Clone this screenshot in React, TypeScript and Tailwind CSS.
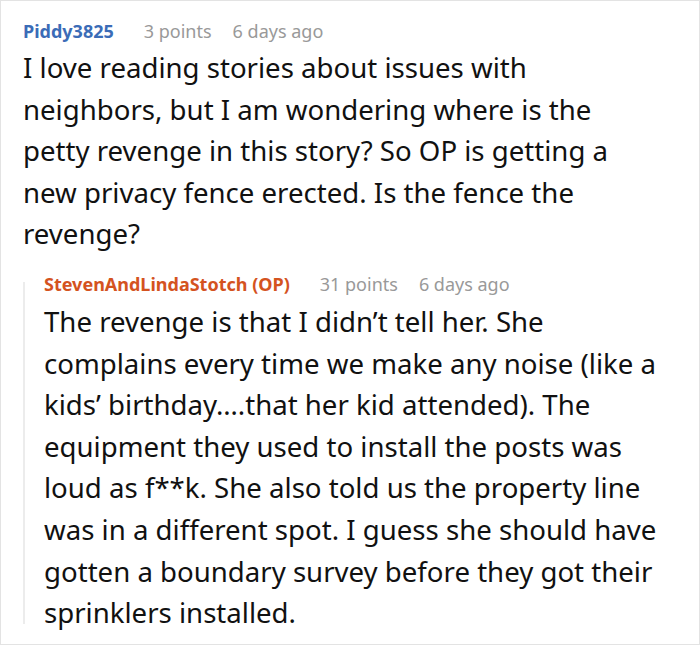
import React from "react";

const font = { fontFamily: '"Noto Sans", "Open Sans", sans-serif' };

function Meta({ name, color, points }: { name: string; color: string; points: string }) {
  return (
    <div className="flex items-center text-[18px] leading-[24px]">
      <span className={`font-bold text-[18px] ${color}`}>{name}</span>
      <span className="ml-[30px] text-[#999999]">{points}</span>
      <span className="ml-[21px] text-[#999999]">6 days ago</span>
    </div>
  );
}

export default function App() {
  return (
    <div style={font} className="w-[700px] h-[645px] border border-[#e3e3e3] bg-white pl-[22px] pr-[30px] pt-[18px] text-[#111111]">
      <Meta name="Piddy3825" color="text-[#3b6cb7]" points="3 points" />
      <p className="mt-[4px] pr-[12px] text-[27.6px] leading-[41.6px]">
        I love reading stories about issues with neighbors, but I am wondering where is the petty revenge in this story? So OP is getting a new privacy fence erected. Is the fence the revenge?
      </p>
      <div className="mt-[17px] flex">
        <div className="w-[2px] bg-[#ececec] mt-[10px] mb-[10px]" />
        <div className="pl-[19px] flex-1">
          <Meta name="StevenAndLindaStotch (OP)" color="text-[#d4531f]" points="31 points" />
          <p className="mt-[5px] text-[27.6px] leading-[41.6px]">
            The revenge is that I didn’t tell her. She complains every time we make any noise (like a kids’ birthday….that her kid attended). The equipment they used to install the posts was loud as f**k. She also told us the property line was in a different spot. I guess she should have gotten a boundary survey before they got their sprinklers installed.
          </p>
        </div>
      </div>
    </div>
  );
}
